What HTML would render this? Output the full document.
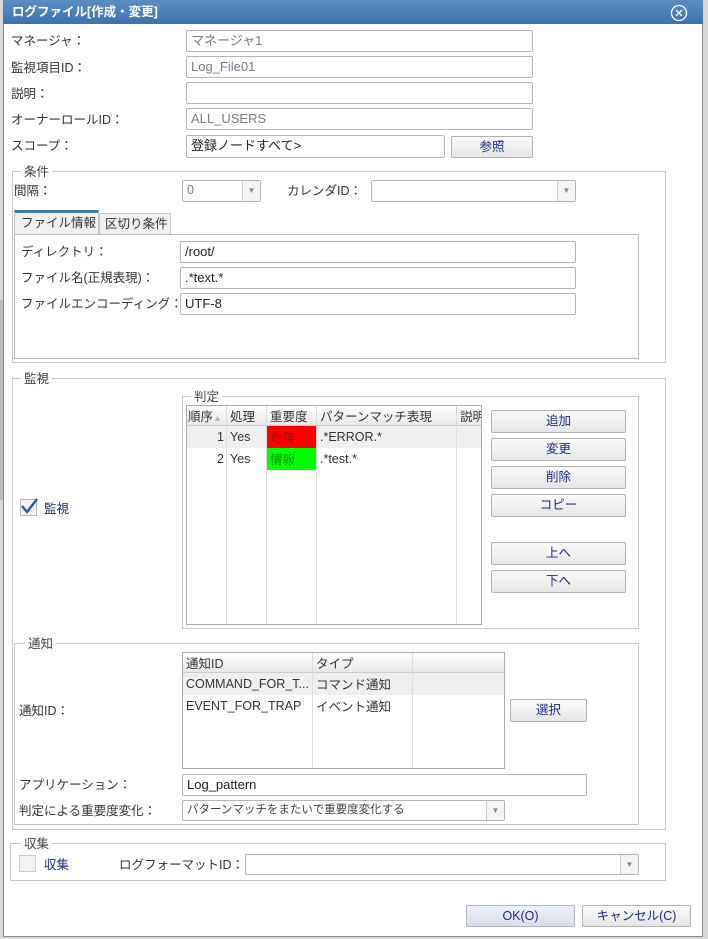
<!DOCTYPE html>
<html><head><meta charset="utf-8"><style>
*{box-sizing:border-box;margin:0;padding:0}
body{width:708px;height:939px;position:relative;overflow:hidden;background:#d8d8d8;font-family:"Liberation Sans","Noto Sans CJK JP",sans-serif;font-size:12.5px;color:#333}
.a{position:absolute}
.dlg{left:3px;top:0;width:700px;height:937px;background:#fff;border:1px solid #8a8a8a}
.title{left:3px;top:0;width:700px;height:24px;background:linear-gradient(#5b8cc4,#3f72ad);color:#fff;font-weight:bold;font-size:12.5px;line-height:24px;padding-left:9px}
.lbl{position:absolute;line-height:14px;white-space:nowrap}
.in{position:absolute;border:1px solid #b5b5b5;border-radius:2px;background:#fff;padding-left:4px;line-height:20px;color:#222;font-size:13px;white-space:nowrap;overflow:hidden}
.dis{color:#7a7a8a}
.btn{position:absolute;border:1px solid #b3b3b3;border-radius:2px;background:linear-gradient(#fafafa,#e6e6e6);text-align:center;color:#1f2a7a;line-height:20px}
.fs{position:absolute;border:1px solid #c8c8c8}
.lg{position:absolute;background:#fff;padding:0 3px;line-height:12px;color:#444}
.sel{position:absolute;border:1px solid #b5b5b5;border-radius:2px;background:#fff;padding-left:4px;line-height:19px;white-space:nowrap;overflow:hidden}
.sel i{position:absolute;right:0;top:0;bottom:0;width:18px;border-left:1px solid #ccc;background:#f4f4f4;font-style:normal;font-size:8px;color:#888;text-align:center;line-height:19px}
table{border-collapse:collapse}
td,th{font-weight:normal;text-align:left;padding:0 3px;white-space:nowrap;overflow:hidden}
</style></head><body>
<div class="a" style="left:0;top:300px;width:3px;height:200px;background:#bbb"></div>
<div class="a dlg"></div>
<div class="a title">ログファイル[作成・変更]</div>
<svg class="a" style="left:670px;top:4px" width="18" height="18" viewBox="0 0 18 18"><circle cx="9" cy="9" r="7.5" fill="none" stroke="#fff" stroke-width="1.3"/><path d="M6 6L12 12M12 6L6 12" stroke="#fff" stroke-width="1.3"/></svg>

<div class="lbl" style="left:11px;top:34px">マネージャ：</div>
<div class="in dis" style="left:186px;top:30px;width:347px;height:22px">マネージャ1</div>
<div class="lbl" style="left:11px;top:61px">監視項目ID：</div>
<div class="in dis" style="left:186px;top:56px;width:347px;height:22px">Log_File01</div>
<div class="lbl" style="left:11px;top:87px">説明：</div>
<div class="in" style="left:186px;top:82px;width:347px;height:22px"></div>
<div class="lbl" style="left:11px;top:113px">オーナーロールID：</div>
<div class="in dis" style="left:186px;top:108px;width:347px;height:22px">ALL_USERS</div>
<div class="lbl" style="left:11px;top:139px">スコープ：</div>
<div class="in" style="left:186px;top:135px;width:259px;height:23px">登録ノードすべて&gt;</div>
<div class="btn" style="left:451px;top:136px;width:82px;height:22px">参照</div>

<div class="fs" style="left:12px;top:171px;width:654px;height:192px"></div>
<div class="lg" style="left:21px;top:166px">条件</div>
<div class="lbl" style="left:14px;top:184px">間隔：</div>
<div class="sel dis" style="left:182px;top:180px;width:79px;height:22px">0<i>▼</i></div>
<div class="lbl" style="left:287px;top:184px">カレンダID：</div>
<div class="sel" style="left:371px;top:180px;width:205px;height:22px"><i>▼</i></div>
<div class="a" style="left:14px;top:210px;width:85px;height:25px;background:#f0f0f0;border:1px solid #c8c8c8;border-top:3px solid #4a78ad;border-bottom:none;line-height:20px;padding-left:6px">ファイル情報</div>
<div class="a" style="left:99px;top:213px;width:72px;height:22px;background:#f0f0f0;border:1px solid #c8c8c8;line-height:20px;padding-left:5px">区切り条件</div>
<div class="fs" style="left:14px;top:234px;width:625px;height:125px;border-color:#bbb"></div>
<div class="lbl" style="left:21px;top:245px">ディレクトリ：</div>
<div class="in" style="left:180px;top:241px;width:396px;height:22px">/root/</div>
<div class="lbl" style="left:21px;top:271px">ファイル名(正規表現)：</div>
<div class="in" style="left:180px;top:267px;width:396px;height:22px">.*text.*</div>
<div class="lbl" style="left:21px;top:297px">ファイルエンコーディング：</div>
<div class="in" style="left:180px;top:293px;width:396px;height:22px">UTF-8</div>

<div class="fs" style="left:12px;top:378px;width:654px;height:452px"></div>
<div class="lg" style="left:21px;top:373px">監視</div>
<div class="a" style="left:20px;top:499px;width:17px;height:17px;border:1px solid #bbb;background:#f4f4f4"></div>
<svg class="a" style="left:19px;top:496px" width="20" height="20" viewBox="0 0 20 20"><path d="M3 10L8 16L18 3" fill="none" stroke="#2a5a9a" stroke-width="2.4"/></svg>
<div class="lbl" style="left:44px;top:502px;color:#1f2a7a">監視</div>

<div class="fs" style="left:182px;top:396px;width:457px;height:233px"></div>
<div class="lg" style="left:191px;top:391px">判定</div>
<div class="a" style="left:186px;top:405px;width:296px;height:220px;border:1px solid #aaa;overflow:hidden">
<table style="width:295px;table-layout:fixed">
<colgroup><col style="width:40px"><col style="width:40px"><col style="width:50px"><col style="width:140px"><col style="width:25px"></colgroup>
<tr style="height:18px;background:linear-gradient(#fff,#e8e8e8);border-bottom:1px solid #ccc"><th style="padding:0 1px">順序<span style="color:#bbb;font-size:9px">▲</span></th><th>処理</th><th>重要度</th><th>パターンマッチ表現</th><th>説明</th></tr>
<tr style="height:22px;background:#efefef"><td style="text-align:right">1</td><td>Yes</td><td style="background:#f00;color:#a00">危険</td><td>.*ERROR.*</td><td></td></tr>
<tr style="height:22px"><td style="text-align:right">2</td><td>Yes</td><td style="background:#0f0;color:#080">情報</td><td>.*test.*</td><td></td></tr>
<tr style="height:160px"><td></td><td></td><td></td><td></td><td></td></tr>
</table>
<div class="a" style="left:39px;top:0;height:220px;border-left:1px solid #ddd"></div>
<div class="a" style="left:79px;top:0;height:220px;border-left:1px solid #ddd"></div>
<div class="a" style="left:129px;top:0;height:220px;border-left:1px solid #ddd"></div>
<div class="a" style="left:269px;top:0;height:220px;border-left:1px solid #ddd"></div>
</div>
<div class="btn" style="left:491px;top:410px;width:135px;height:23px">追加</div>
<div class="btn" style="left:491px;top:438px;width:135px;height:23px">変更</div>
<div class="btn" style="left:491px;top:466px;width:135px;height:23px">削除</div>
<div class="btn" style="left:491px;top:494px;width:135px;height:23px">コピー</div>
<div class="btn" style="left:491px;top:542px;width:135px;height:23px">上へ</div>
<div class="btn" style="left:491px;top:570px;width:135px;height:23px">下へ</div>

<div class="fs" style="left:14px;top:643px;width:625px;height:182px"></div>
<div class="lg" style="left:25px;top:638px">通知</div>
<div class="a" style="left:182px;top:652px;width:323px;height:117px;border:1px solid #aaa;overflow:hidden">
<table style="width:322px;table-layout:fixed">
<colgroup><col style="width:130px"><col style="width:100px"><col></colgroup>
<tr style="height:18px;background:linear-gradient(#fff,#e8e8e8);border-bottom:1px solid #ccc"><th>通知ID</th><th>タイプ</th><th></th></tr>
<tr style="height:22px;background:#efefef"><td>COMMAND_FOR_T...</td><td>コマンド通知</td><td></td></tr>
<tr style="height:22px"><td>EVENT_FOR_TRAP</td><td>イベント通知</td><td></td></tr>
</table>
<div class="a" style="left:129px;top:0;height:117px;border-left:1px solid #ddd"></div>
<div class="a" style="left:229px;top:0;height:117px;border-left:1px solid #ddd"></div>
</div>
<div class="lbl" style="left:19px;top:704px">通知ID：</div>
<div class="btn" style="left:510px;top:699px;width:77px;height:23px">選択</div>
<div class="lbl" style="left:19px;top:778px">アプリケーション：</div>
<div class="in" style="left:182px;top:774px;width:405px;height:22px">Log_pattern</div>
<div class="lbl" style="left:19px;top:804px">判定による重要度変化：</div>
<div class="sel" style="left:182px;top:800px;width:323px;height:21px;font-size:11.5px;color:#444">パターンマッチをまたいで重要度変化する<i>▼</i></div>

<div class="fs" style="left:10px;top:843px;width:656px;height:38px"></div>
<div class="lg" style="left:21px;top:838px">収集</div>
<div class="a" style="left:19px;top:855px;width:17px;height:17px;border:1px solid #ccc;background:#f2f2f2"></div>
<div class="lbl" style="left:44px;top:858px;color:#1f2a7a">収集</div>
<div class="lbl" style="left:119px;top:858px">ログフォーマットID：</div>
<div class="sel" style="left:245px;top:854px;width:394px;height:21px"><i>▼</i></div>

<div class="btn" style="left:466px;top:905px;width:109px;height:22px;background:linear-gradient(#eef2f8,#d8dfea)">OK(O)</div>
<div class="btn" style="left:582px;top:905px;width:109px;height:22px">キャンセル(C)</div>
</body></html>
